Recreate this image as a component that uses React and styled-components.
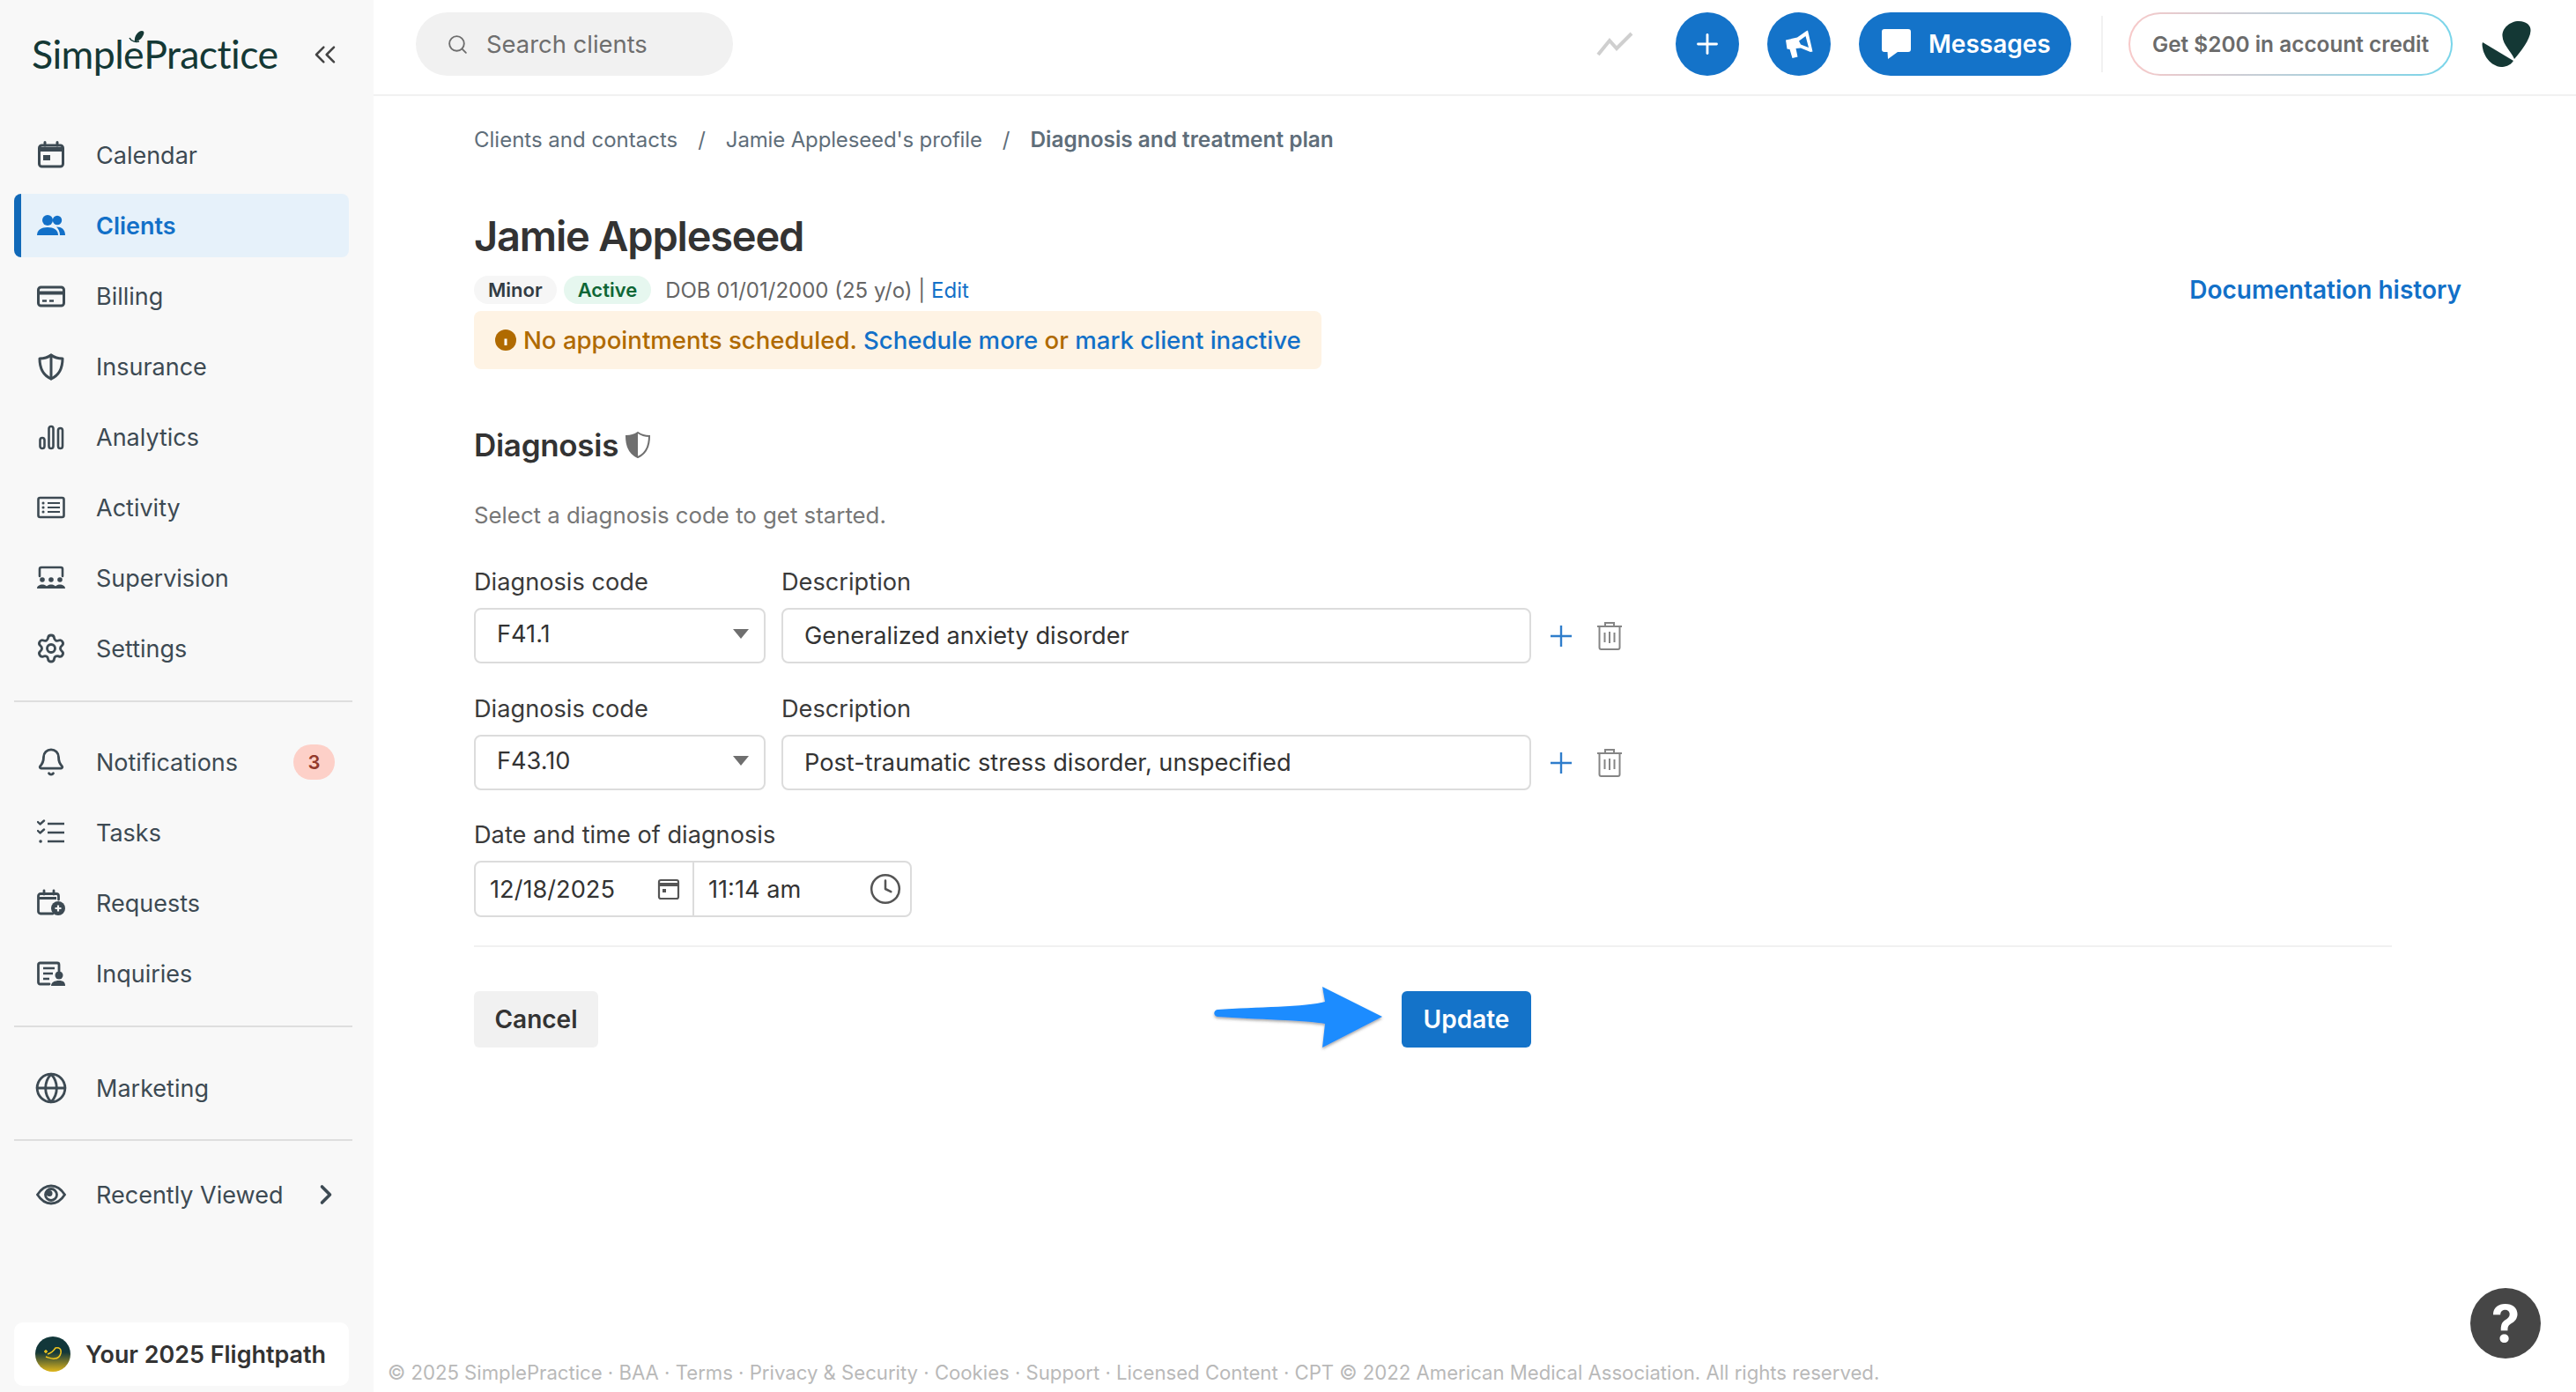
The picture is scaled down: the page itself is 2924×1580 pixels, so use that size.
import React from "react";
import styled, { createGlobalStyle } from "styled-components";
import { Bell, ChevronRight, ChevronsLeft, Clock, Globe, Plus, Search, Settings } from "lucide-react";

const Global = createGlobalStyle`
  * { box-sizing: border-box; }
  html, body { margin: 0; padding: 0; background: #fff; }
  body { font-family: Inter, "Liberation Sans", sans-serif; color: #333; }
`;

const Page = styled.div`display: flex; width: 100%; height: 100vh; overflow: hidden;`;

const Sidebar = styled.aside`
  flex: 0 0 424px; width: 424px; min-width: 0; display: flex; flex-direction: column; background: #f8f8f8; padding: 0 28px 7px 16px;
`;
const LogoRow = styled.div`
  height: 140px; flex: none; display: flex; align-items: flex-start; justify-content: space-between;
  padding: 31px 0 0 20px; color: #143835;
`;
const Logo = styled.div`
  position: relative; font-family: Lato, sans-serif; font-size: 44.7px; line-height: 60px; font-weight: 400;
  letter-spacing: -0.6px; color: #143835;
`;
const Leaf = styled.svg`position: absolute; left: 110px; top: 4px; width: 18px; height: 14px;`;
const Collapse = styled.div`margin: 11px 7px 0 0; color: #444; display: flex;`;
const NavGroup = styled.nav`display: flex; flex-direction: column; gap: 8px;`;
const NavItem = styled.a`
  position: relative; display: flex; align-items: center; height: 72px; width: 380px; border-radius: 8px;
  font-size: 27px; color: ${(p) => (p.$active ? "#1270c8" : "#3d4a53")}; font-weight: ${(p) => (p.$active ? 600 : 400)};
  background: ${(p) => (p.$active ? "#e6f1fa" : "transparent")};
  border-left: ${(p) => (p.$active ? "8px solid #1169b8" : "none")};
  padding-left: ${(p) => (p.$active ? "18px" : "26px")};
`;
const NavIcon = styled.span`
  flex: 0 0 32px; width: 32px; height: 32px; display: flex; align-items: center; justify-content: center; margin-right: 35px;
  svg { flex: none; }
`;
const NavLabel = styled.span`flex: 1;`;
const Count = styled.span`
  width: 47px; height: 40px; margin-right: 16px; border-radius: 20px; background: #fdd0c8; color: #93392c;
  display: flex; align-items: center; justify-content: center; font-size: 22px; font-weight: 600;
`;
const NavChevron = styled.span`display: flex; margin-right: 8px; color: #3d4a53;`;
const Rule = styled.hr`
  width: 384px; height: 2px; border: 0; margin: ${(p) => p.$m}; background: #dedede; flex: none;
`;
const Flightpath = styled.div`
  margin-top: auto; height: 72px; width: 380px; background: #fff; border-radius: 10px; display: flex; align-items: center;
  padding-left: 24px; gap: 17px; font-size: 26.9px; font-weight: 600; color: #333;
`;
const FlightBadge = styled.svg`width: 40px; height: 40px; flex: none;`;

const Main = styled.main`flex: 1; min-width: 0; display: flex; flex-direction: column;`;
const TopBar = styled.header`
  flex: 0 0 109px; border-bottom: 2px solid #f1f1f1; display: flex; align-items: flex-start; padding: 14px 47px 0 48px;
`;
const SearchBox = styled.div`
  width: 360px; height: 72px; border-radius: 36px; background: #f1f1f1; display: flex; align-items: center; padding-left: 35px; gap: 20px;
  color: #6e6e6e; font-size: 27.4px;
`;
const TopActions = styled.div`margin-left: auto; display: flex; align-items: center; gap: 32px; height: 72px;`;
const Trend = styled.svg`width: 42px; height: 28px; margin-right: 16px;`;
const RoundBtn = styled.button`
  width: 72px; height: 72px; border: 0; border-radius: 50%; background: #1473c9; color: #fff; display: flex; align-items: center; justify-content: center; padding: 0;
`;
const MsgBtn = styled.button`
  height: 72px; width: 241px; border: 0; border-radius: 36px; background: #1473c9; color: #fff; display: flex; align-items: center;
  padding: 0 0 0 26px; gap: 20px; font: 600 28px Inter, sans-serif;
`;
const VRule = styled.span`width: 2px; height: 64px; background: #f1f1f1; margin: 0 -3px 0 2px;`;
const Credit = styled.div`
  width: 368px; height: 72px; border-radius: 36px; border: 2px solid transparent;
  background: linear-gradient(#fff, #fff) padding-box, linear-gradient(90deg, #f8c9c9, #78d5ea) border-box;
  display: flex; align-items: center; justify-content: center; font-size: 24.4px; font-weight: 600; color: #6b6b6b; white-space: nowrap;
`;
const Avatar = styled.svg`width: 60px; height: 54px; margin-left: 1px;`;

const Content = styled.div`flex: 1; display: flex; flex-direction: column; padding: 31px 130px 0 114px; position: relative;`;
const Crumbs = styled.div`display: flex; align-items: center; height: 36px; font-size: 24px; color: #5f6e7a;`;
const CrumbSep = styled.span`margin: 0 23px;`;
const CrumbTight = styled.span`letter-spacing: -0.15px;`;
const CrumbNow = styled.span`font-weight: 600; font-size: 24.4px;`;
const Head = styled.div`display: flex; justify-content: space-between; margin-top: 62px;`;
const Name = styled.h1`margin: 0; font-size: 47px; line-height: 60px; font-weight: 600; color: #333; letter-spacing: -1.2px;`;
const MetaRow = styled.div`display: flex; align-items: center; height: 32px; margin-top: 15px; font-size: 24px; color: #666;`;
const Pill = styled.span`
  height: 32px; padding: 0 16px; border-radius: 16px; display: flex; align-items: center; margin-right: ${(p) => p.$mr}px;
  font-size: 22px; font-weight: 600; background: ${(p) => p.$bg}; color: ${(p) => p.$fg};
`;
const Link = styled.a`color: #1270c8; font-weight: ${(p) => p.$w || 400};`;
const HistoryLink = styled(Link)`font-size: 28px; line-height: 36px; margin-top: 73px; font-weight: 600;`;
const Alert = styled.div`
  margin-top: 8px; width: 962px; height: 66px; border-radius: 8px; background: #fef3e4; display: flex; align-items: center; padding-left: 24px; gap: 8px;
  color: #b06a00; font-size: 27.6px; font-weight: 500; white-space: pre;
`;
const Diagnosis = styled.h2`display: flex; align-items: center; gap: 8px; margin: 64px 0 0; font-size: 35px; line-height: 44px; font-weight: 600; color: #333; letter-spacing: -0.3px;`;
const Hint = styled.p`margin: 40px 0 0; font-size: 25.8px; line-height: 36px; color: #777;`;
const FieldRow = styled.div`
  display: grid; grid-template-columns: 331px 851px auto; column-gap: 18px; margin-top: ${(p) => p.$mt}px;
`;
const Label = styled.div`font-size: 27.2px; line-height: 36px; color: #3a3a3a; margin-bottom: 11px;`;
const Select = styled.div`
  height: 63px; border: 2px solid #dcdcdc; border-radius: 8px; display: flex; align-items: center; justify-content: space-between; padding: 0 17px 4px 24px;
  font-size: 27.2px; color: #333; background: #fff;
`;
const Caret = styled.span`width: 0; height: 0; border-left: 9px solid transparent; border-right: 9px solid transparent; border-top: 11px solid #6f6f6f;`;
const TextField = styled.input`
  width: 100%; height: 63px; border: 2px solid #dcdcdc; border-radius: 8px; padding: 0 24px; font: 400 27.2px Inter, sans-serif; color: #333; outline: none; background: #fff;
`;
const RowActions = styled.div`height: 63px; display: flex; align-items: center; gap: 28px; padding-left: 4px;`;
const Plain = styled.div`grid-column: 1 / span 3;`;
const DateRow = styled.div`
  width: 497px; height: 64px; border: 2px solid #dcdcdc; border-radius: 8px; display: flex; font-size: 27.2px; color: #333;
`;
const DatePart = styled.div`
  width: ${(p) => p.$w}px; display: flex; align-items: center; justify-content: space-between; padding: 0 ${(p) => p.$pr}px 0 16px;
  border-right: ${(p) => (p.$split ? "2px solid #dcdcdc" : "none")};
`;
const Separator = styled.hr`height: 2px; border: 0; background: #f1f1f1; margin: 32px 0 0; width: 2177px;`;
const Actions = styled.div`display: flex; justify-content: space-between; width: 1200px; margin-top: 50px;`;
const Cancel = styled.button`height: 64px; width: 141px; border: 0; border-radius: 6px; background: #f1f1f1; color: #333; font: 600 28px Inter, sans-serif;`;
const UpdateWrap = styled.div`position: relative;`;
const Update = styled.button`height: 64px; width: 147px; border: 0; border-radius: 6px; background: #1473c9; color: #fff; font: 600 28px Inter, sans-serif;`;
const Arrow = styled.svg`position: absolute; right: 168px; top: -5px; width: 192px; height: 70px; overflow: visible;`;
const Footer = styled.footer`
  position: absolute; left: 16px; bottom: 8px; font-size: 22.15px; line-height: 28px; color: #b9b9b9; white-space: nowrap;
`;
const Help = styled.button`
  position: absolute; right: 40px; bottom: 38px; width: 80px; height: 80px; border: 0; border-radius: 50%; background: #464646; color: #fff;
  font: 700 58px/80px Inter, sans-serif; padding: 0; text-align: center;
`;

const Svg = ({ children, fill = "none" }) => (
  <svg width="32" height="32" viewBox="0 0 32 32" fill={fill} stroke={fill === "none" ? "currentColor" : "none"} strokeWidth="3" strokeLinecap="round" strokeLinejoin="round">
    {children}
  </svg>
);

const CalendarIcon = () => (
  <Svg>
    <rect x="2.5" y="5" width="27" height="24" rx="3" />
    <path d="M2.5 9.5h27" strokeWidth="5" strokeLinecap="butt" />
    <path d="M9 1.5V5M23 1.5V5" />
    <rect x="7" y="16" width="8" height="6" fill="currentColor" stroke="none" />
  </Svg>
);
const ClientsIcon = () => (
  <Svg fill="currentColor">
    <circle cx="12" cy="10" r="6" />
    <circle cx="23" cy="10" r="5.2" />
    <path d="M0 27c0-6 5-9 12-9s12 3 12 9z" />
    <path d="M22 17.5c6 0 10 3 10 9.5h-6c0-4-1.500-7-4-9.500z" />
  </Svg>
);
const BillingIcon = () => (
  <Svg>
    <rect x="1.500" y="6" width="29" height="21" rx="3" />
    <path d="M2 12.500h28" strokeWidth="4" strokeLinecap="butt" />
    <path d="M6 21.500h5M14 21.500h5" strokeWidth="2.500" strokeLinecap="butt" />
  </Svg>
);
const ShieldIcon = () => (
  <Svg>
    <path d="M16 3c4 3 8 4 13 4 0 11-4 19-13 23C7 26 3 18 3 7c5 0 9-1 13-4z" />
    <path d="M16 3v27" />
  </Svg>
);
const AnalyticsIcon = () => (
  <Svg>
    <rect x="3.500" y="17" width="5" height="12" rx="2.500" strokeWidth="2.600" />
    <rect x="13.500" y="4" width="5" height="25" rx="2.500" strokeWidth="2.600" />
    <rect x="24" y="6" width="5" height="23" rx="2.500" strokeWidth="2.600" />
  </Svg>
);
const ActivityIcon = () => (
  <Svg>
    <rect x="1.500" y="5" width="29" height="22" rx="2" strokeWidth="2.600" />
    <path d="M7 11h.1M7 16h.1M7 21h.1" />
    <path d="M12 11h14M12 16h14M12 21h14" strokeWidth="2.200" strokeLinecap="butt" />
  </Svg>
);
const SupervisionIcon = () => (
  <Svg>
    <path d="M3 14V6a2 2 0 0 1 2-2h22a2 2 0 0 1 2 2v8" strokeWidth="2.600" />
    <g fill="currentColor" stroke="none">
      <circle cx="6" cy="18" r="2.800" /><circle cx="16" cy="18" r="2.800" /><circle cx="26" cy="18" r="2.800" />
      <path d="M0 28c0-3 3-4.500 6-4.500s6 1.500 6 4.500zM10 28c0-3 3-4.500 6-4.500s6 1.500 6 4.500zM20 28c0-3 3-4.500 6-4.500s6 1.500 6 4.500z" />
    </g>
  </Svg>
);
const TasksIcon = () => (
  <Svg>
    <path d="M12 6h19M12 16h19M12 26h19" strokeWidth="2.400" strokeLinecap="butt" />
    <path d="M1 4l2.500 2.500L8 2.500M1 14l2.500 2.500L8 12.500" strokeWidth="2.400" />
    <path d="M4 26h.1" strokeWidth="3.500" />
  </Svg>
);
const RequestsIcon = () => (
  <Svg>
    <path d="M18 28H4a2.500 2.500 0 0 1-2.500-2.500V8A2.500 2.500 0 0 1 4 5.500h18A2.500 2.500 0 0 1 24.500 8v4" strokeWidth="2.800" />
    <path d="M2 10.500h20" strokeWidth="3" strokeLinecap="butt" />
    <path d="M8 2v4M19 2v4" strokeWidth="2.800" />
    <circle cx="24" cy="22" r="8" fill="currentColor" stroke="none" />
    <path d="M24 18.500v7M20.500 22h7" stroke="#f8f8f8" strokeWidth="2.200" strokeLinecap="butt" />
  </Svg>
);
const InquiriesIcon = () => (
  <Svg>
    <path d="M14 28H3.500A2 2 0 0 1 1.500 26V6a2 2 0 0 1 2-2H23a2 2 0 0 1 2 2v7" strokeWidth="2.800" />
    <path d="M7 10h13M7 16h11M7 22h7" strokeWidth="2.400" strokeLinecap="butt" />
    <g fill="currentColor" stroke="none">
      <circle cx="25" cy="18" r="4.500" />
      <path d="M16 30c0-4 4-6 9-6s7 2 7 6z" />
    </g>
  </Svg>
);
const RecentIcon = () => (
  <svg width="34" height="32" viewBox="0 0 34 32" fill="none" stroke="currentColor" strokeWidth="2.800">
    <path d="M1.500 16C6 9 11 6 17 6s11 3 15.500 10C28 23 23 26 17 26S6 23 1.500 16z" />
    <circle cx="17" cy="16" r="6.500" />
    <circle cx="15" cy="14.500" r="3.500" fill="currentColor" stroke="none" />
  </svg>
);
const HalfShield = () => (
  <svg width="28" height="30" viewBox="0 0 28 30">
    <path d="M14 1c3.500 2.500 8 4 13 4 0 11-4 20-13 24C5 25 1 16 1 5c5 0 9.500-1.500 13-4z" fill="none" stroke="#6f6f6f" strokeWidth="2" />
    <path d="M14 1c-3.500 2.500-8 4-13 4 0 11 4 20 13 24z" fill="#6f6f6f" />
  </svg>
);
const RowPlus = () => (
  <svg width="24" height="24" viewBox="0 0 24 24" stroke="#2f7dcb" strokeWidth="2.400"><path d="M12 0v24M0 12h24" /></svg>
);
const TrashIcon = () => (
  <svg width="30" height="33" viewBox="0 0 30 33" fill="none" stroke="#858585" strokeWidth="2">
    <path d="M1 6h28M3.500 6v24a2 2 0 0 0 2 2h19a2 2 0 0 0 2-2V6M10 6V2h10v4" />
    <path d="M9.500 13v11M15 12v13M20.500 13v11" />
  </svg>
);
const MegaphoneIcon = () => (
  <svg width="72" height="72" viewBox="0 0 72 72">
    <path fillRule="evenodd" fill="#fff" d="M21 31.500L34 28.500 44 21.500 46 20.500 51.500 44.500 49 45 38 40.500 32.500 41 34.500 50.500 28.500 52 25.500 42 22.500 41.500zM36 32.500L43.500 27 47 40 38 36.500z" />
  </svg>
);
const BubbleIcon = () => (
  <svg width="33" height="34" viewBox="0 0 33 34">
    <path d="M3 0h27a3 3 0 0 1 3 3v20a3 3 0 0 1-3 3H18L7 34l-.5-8H3a3 3 0 0 1-3-3V3a3 3 0 0 1 3-3z" fill="#fff" />
  </svg>
);

const Item = ({ icon, label, active, children }) => (
  <NavItem $active={active}>
    <NavIcon>{icon}</NavIcon>
    <NavLabel>{label}</NavLabel>
    {children}
  </NavItem>
);

const DiagnosisFields = ({ code, description, mt }) => (
  <FieldRow $mt={mt}>
    <Label>Diagnosis code</Label>
    <Label>Description</Label>
    <span />
    <Select>{code}<Caret /></Select>
    <TextField readOnly value={description} />
    <RowActions><RowPlus /><TrashIcon /></RowActions>
  </FieldRow>
);

export default function App() {
  return (
    <Page>
      <Global />
      <Sidebar>
        <LogoRow>
          <Logo>
            Simple<Leaf viewBox="0 0 18 14"><path d="M7 12C6 6 11 0 15 0c3 0 3 3 1 6-2 4-6 6-9 6z" fill="#143835" /><path d="M1 8c2 4 7 5 11 4" fill="none" stroke="#143835" strokeWidth="1.500" /></Leaf>Practice
          </Logo>
          <Collapse><ChevronsLeft size={40} strokeWidth={1.5} /></Collapse>
        </LogoRow>
        <NavGroup>
          <Item icon={<CalendarIcon />} label="Calendar" />
          <Item icon={<ClientsIcon />} label="Clients" active />
          <Item icon={<BillingIcon />} label="Billing" />
          <Item icon={<ShieldIcon />} label="Insurance" />
          <Item icon={<AnalyticsIcon />} label="Analytics" />
          <Item icon={<ActivityIcon />} label="Activity" />
          <Item icon={<SupervisionIcon />} label="Supervision" />
          <Item icon={<Settings size={36} strokeWidth={1.9} />} label="Settings" />
        </NavGroup>
        <Rule $m="23px 0 32px" />
        <NavGroup>
          <Item icon={<Bell size={34} strokeWidth={2} />} label="Notifications"><Count>3</Count></Item>
          <Item icon={<TasksIcon />} label="Tasks" />
          <Item icon={<RequestsIcon />} label="Requests" />
          <Item icon={<InquiriesIcon />} label="Inquiries" />
        </NavGroup>
        <Rule $m="23px 0 33px" />
        <NavGroup>
          <Item icon={<Globe size={38} strokeWidth={1.8} />} label="Marketing" />
        </NavGroup>
        <Rule $m="22px 0 25px" />
        <NavGroup>
          <Item icon={<RecentIcon />} label="Recently Viewed">
            <NavChevron><ChevronRight size={36} strokeWidth={2.4} /></NavChevron>
          </Item>
        </NavGroup>
        <Flightpath>
          <FlightBadge viewBox="0 0 40 40">
            <defs>
              <linearGradient id="fp" x1="0" y1="0" x2="0" y2="1">
                <stop offset="0.45" stopColor="#12373a" />
                <stop offset="1" stopColor="#e0b71c" />
              </linearGradient>
            </defs>
            <circle cx="20" cy="20" r="20" fill="url(#fp)" />
            <path d="M14 20c4-1 7-4 9-7 4-1 7 1 6 6-1 4-4 6-7 6-3 1-6-1-10-2M12 15v4M10 17h4" fill="none" stroke="#f1c61f" strokeWidth="1.500" />
          </FlightBadge>
          Your 2025 Flightpath
        </Flightpath>
      </Sidebar>
      <Main>
        <TopBar>
          <SearchBox><Search size={25} strokeWidth={1.8} />Search clients</SearchBox>
          <TopActions>
            <Trend viewBox="0 0 42 28"><path d="M2 26L15 10l8 9L40 2" fill="none" stroke="#cfcfcf" strokeWidth="4" /></Trend>
            <RoundBtn><Plus size={36} strokeWidth={1.9} /></RoundBtn>
            <RoundBtn><MegaphoneIcon /></RoundBtn>
            <MsgBtn><BubbleIcon />Messages</MsgBtn>
            <VRule />
            <Credit>Get $200 in account credit</Credit>
            <Avatar viewBox="0 0 60 54">
              <path d="M23.500 18C23 9 32 1 42 1c9 0 14 5 13.500 11C55 22 44 36 37 44 34 36 24 28 23.500 18z" fill="#143835" />
              <path d="M1 25l35 21c-4 6-10 7-14 7C10 52 1 40 .5 27z" fill="#143835" />
            </Avatar>
          </TopActions>
        </TopBar>
        <Content>
          <Crumbs>
            <span>Clients and contacts</span><CrumbSep>/</CrumbSep>
            <CrumbTight>Jamie Appleseed's profile</CrumbTight><CrumbSep>/</CrumbSep>
            <CrumbNow>Diagnosis and treatment plan</CrumbNow>
          </Crumbs>
          <Head>
            <div>
              <Name>Jamie Appleseed</Name>
              <MetaRow>
                <Pill $bg="#f6f6f6" $fg="#333c44" $mr={8}>Minor</Pill>
                <Pill $bg="#e6f7ef" $fg="#0e6636" $mr={16}>Active</Pill>
                DOB 01/01/2000 (25 y/o) |&nbsp;<Link>Edit</Link>
              </MetaRow>
              <Alert>
                <svg width="24" height="24" viewBox="0 0 24 24"><circle cx="12" cy="12" r="12" fill="#b06a00" /><path d="M12 6v.1M12 10.500V18" stroke="#fff" strokeWidth="3" fill="none" /></svg>
                <span>No appointments scheduled. <Link $w={500}>Schedule more</Link> or <Link $w={500}>mark client inactive</Link></span>
              </Alert>
            </div>
            <HistoryLink>Documentation history</HistoryLink>
          </Head>
          <Diagnosis>Diagnosis <HalfShield /></Diagnosis>
          <Hint>Select a diagnosis code to get started.</Hint>
          <DiagnosisFields code="F41.1" description="Generalized anxiety disorder" mt={40} />
          <DiagnosisFields code="F43.10" description="Post-traumatic stress disorder, unspecified" mt={34} />
          <FieldRow $mt={33}>
            <Plain>
              <Label>Date and time of diagnosis</Label>
              <DateRow>
                <DatePart $w={248} $pr={14} $split>
                  12/18/2025
                  <svg width="26" height="26" viewBox="0 0 26 26" fill="none" stroke="#555" strokeWidth="2.200"><rect x="2" y="3" width="22" height="21" rx="2" /><path d="M2 8h22" strokeWidth="4" /><rect x="6" y="13" width="4" height="4" fill="#555" stroke="none" /></svg>
                </DatePart>
                <DatePart $w={245} $pr={9}>
                  11:14 am
                  <Clock size={38} color="#555" strokeWidth={1.6} />
                </DatePart>
              </DateRow>
            </Plain>
          </FieldRow>
          <Separator />
          <Actions>
            <Cancel>Cancel</Cancel>
            <UpdateWrap>
              <Arrow viewBox="0 0 192 70">
                <defs>
                  <filter id="as" x="-5%" y="-5%" width="110%" height="120%"><feDropShadow dx="0" dy="2" stdDeviation="1.500" floodColor="#555" floodOpacity="0.5" /></filter>
                </defs>
                <path d="M123 0l68 34-68 35 3-27c-20-4-80-5-122-8-5-1-5-7 0-8 42-3 102-3 122-9z" fill="#1a8cff" filter="url(#as)" />
              </Arrow>
              <Update>Update</Update>
            </UpdateWrap>
          </Actions>
          <Footer>© 2025 SimplePractice · BAA · Terms · Privacy &amp; Security · Cookies · Support · Licensed Content · CPT © 2022 American Medical Association. All rights reserved.</Footer>
          <Help>?</Help>
        </Content>
      </Main>
    </Page>
  );
}
